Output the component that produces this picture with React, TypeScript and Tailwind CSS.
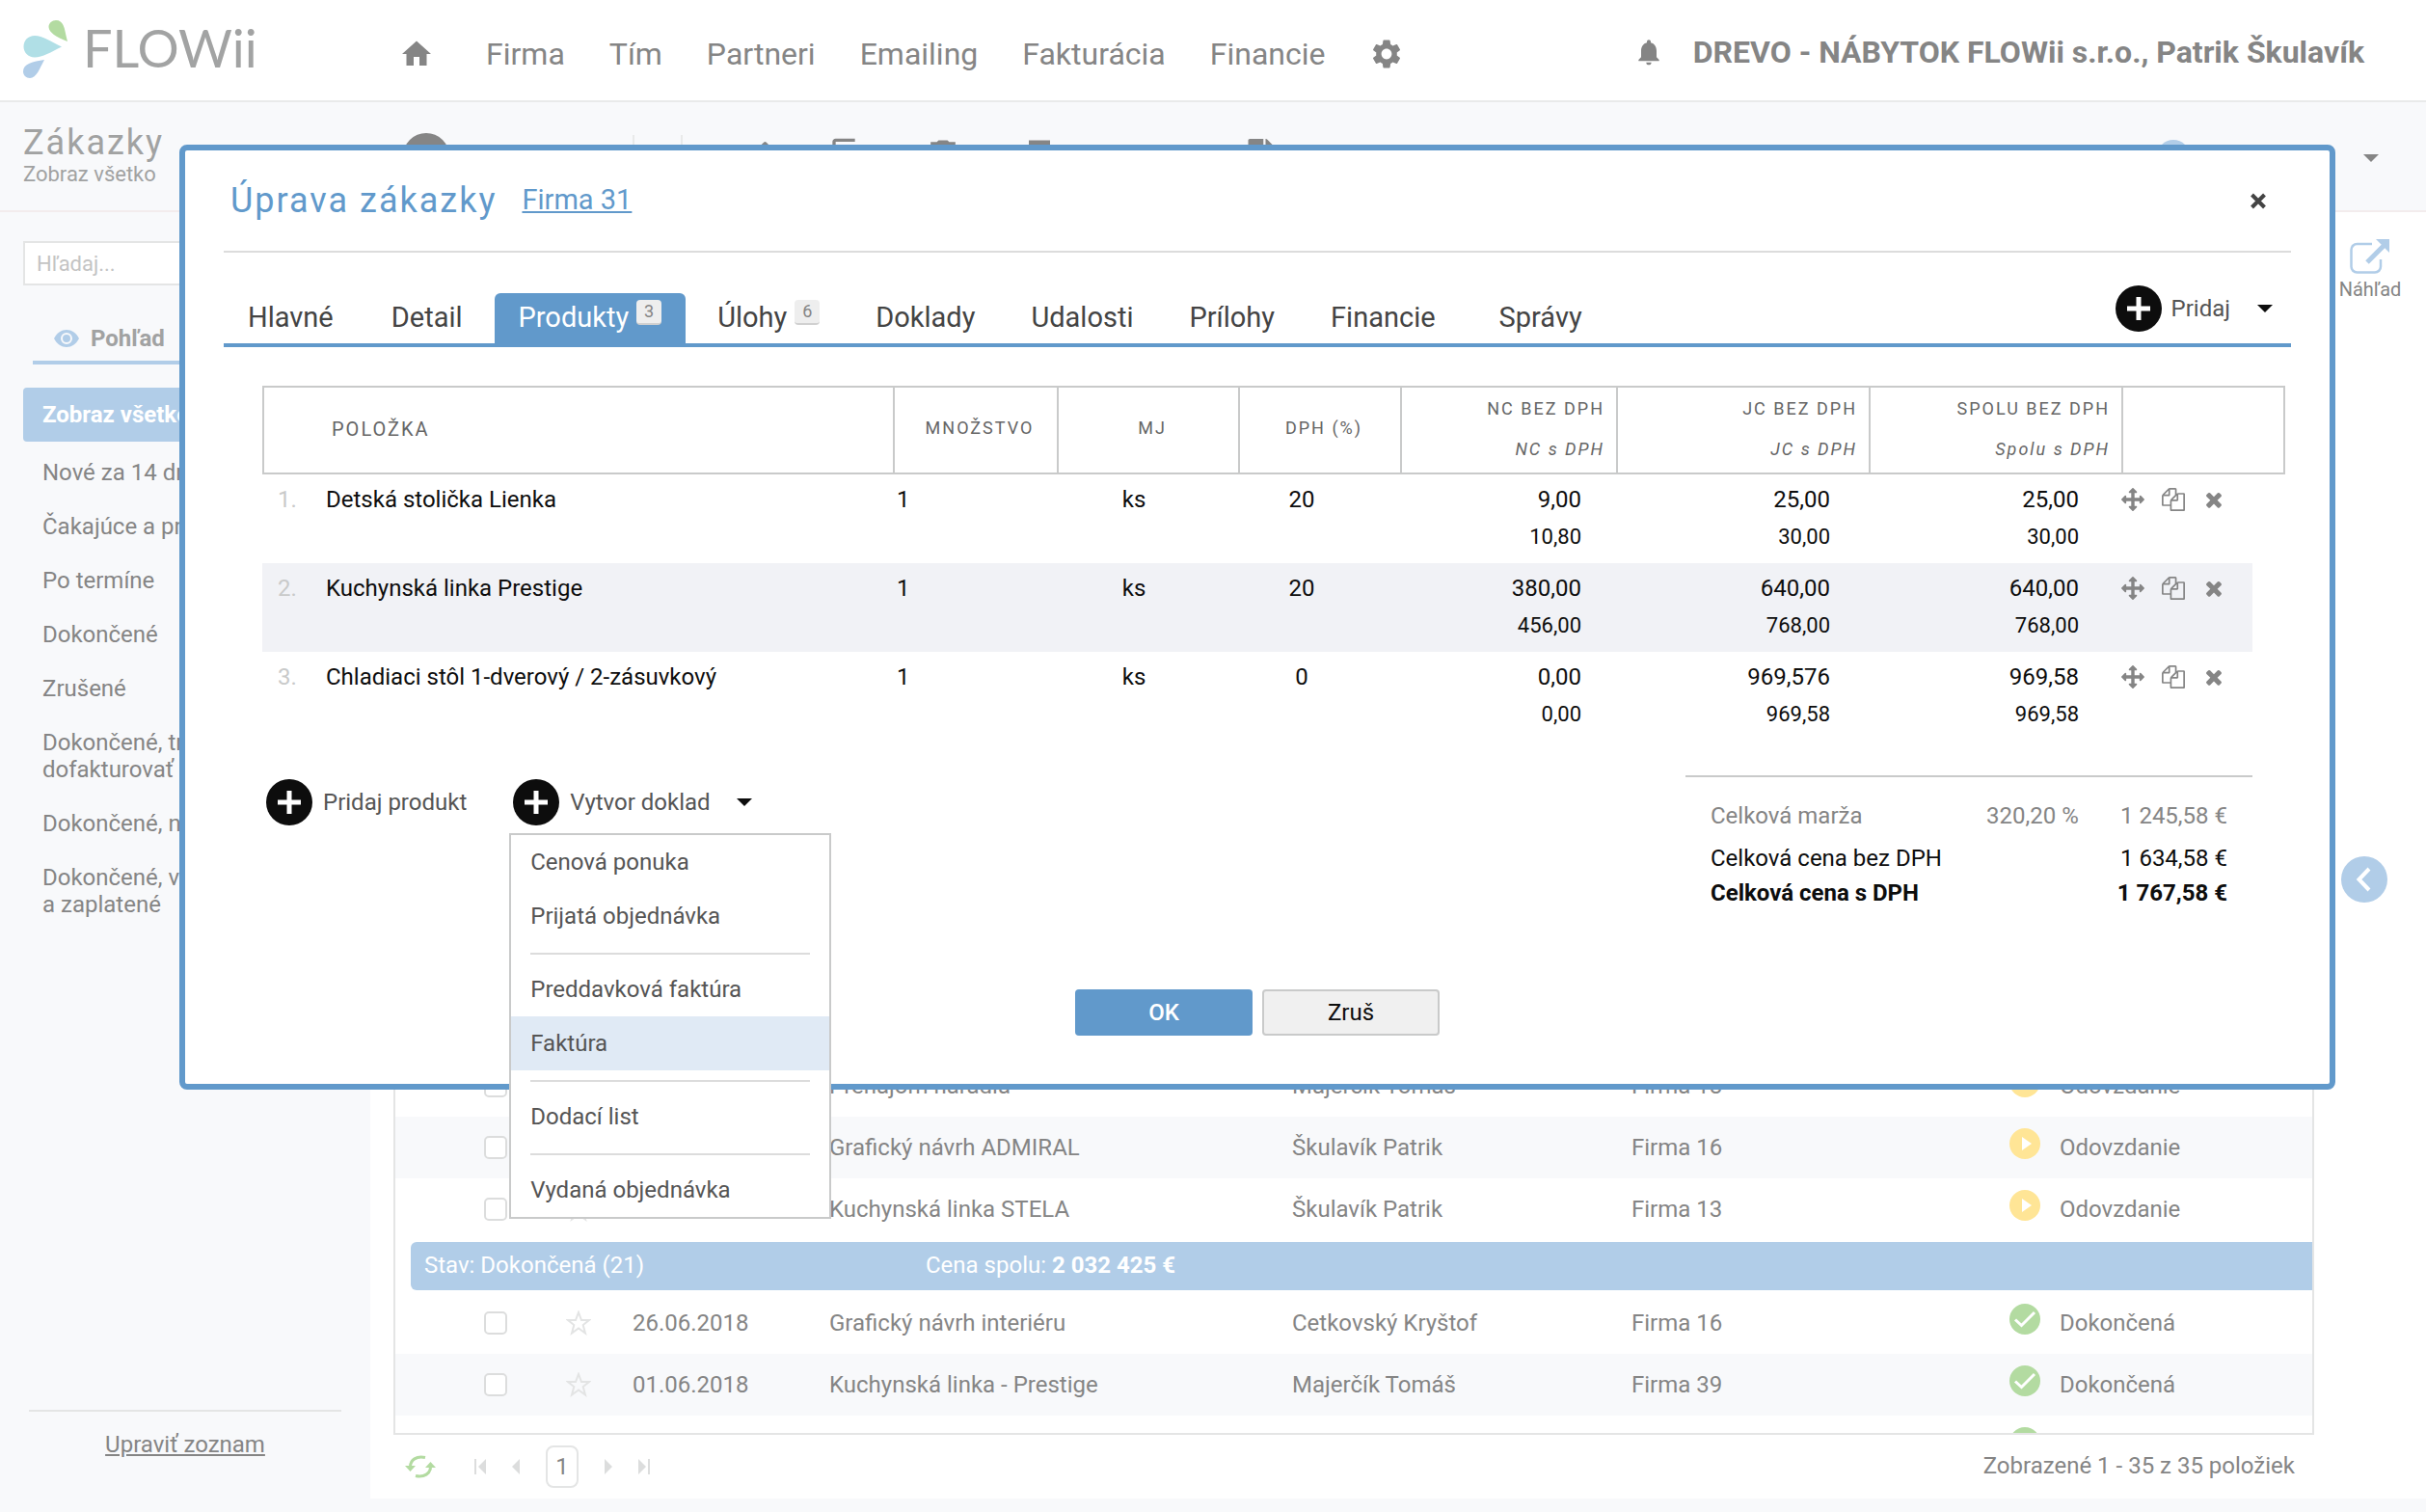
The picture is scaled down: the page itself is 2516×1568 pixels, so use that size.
import { useState, type ReactNode } from 'react'
import {
  MdContentCopy,
  MdDelete,
  MdEdit,
  MdHome,
  MdNotifications,
  MdPrint,
  MdSettings,
} from 'react-icons/md'
import { FaFile } from 'react-icons/fa'

const navLinks = ['Firma', 'Tím', 'Partneri', 'Emailing', 'Fakturácia', 'Financie']

const sidebarViews = [
  'Nové za 14 dní',
  'Čakajúce a prebiehajúce',
  'Po termíne',
  'Dokončené',
  'Zrušené',
  'Dokončené, treba dofakturovať',
  'Dokončené, nezaplatené',
  'Dokončené, vyfakturované a\u00a0zaplatené',
]

type Order = {
  date: string
  name: string
  person: string
  firm: string
  status: string
}

const activeOrders: Order[] = [
  { date: '', name: 'Prenájom náradia', person: 'Majerčík Tomáš', firm: 'Firma 18', status: 'Odovzdanie' },
  { date: '', name: 'Grafický návrh ADMIRAL', person: 'Škulavík Patrik', firm: 'Firma 16', status: 'Odovzdanie' },
  { date: '', name: 'Kuchynská linka STELA', person: 'Škulavík Patrik', firm: 'Firma 13', status: 'Odovzdanie' },
]

const doneOrders: Order[] = [
  { date: '26.06.2018', name: 'Grafický návrh interiéru', person: 'Cetkovský Kryštof', firm: 'Firma 16', status: 'Dokončená' },
  { date: '01.06.2018', name: 'Kuchynská linka - Prestige', person: 'Majerčík Tomáš', firm: 'Firma 39', status: 'Dokončená' },
]

const tabs: { label: string; count?: number }[] = [
  { label: 'Hlavné' },
  { label: 'Detail' },
  { label: 'Produkty', count: 3 },
  { label: 'Úlohy', count: 6 },
  { label: 'Doklady' },
  { label: 'Udalosti' },
  { label: 'Prílohy' },
  { label: 'Financie' },
  { label: 'Správy' },
]

const products = [
  { name: 'Detská stolička Lienka', qty: '1', unit: 'ks', vat: '20', nc: ['9,00', '10,80'], jc: ['25,00', '30,00'], total: ['25,00', '30,00'] },
  { name: 'Kuchynská linka Prestige', qty: '1', unit: 'ks', vat: '20', nc: ['380,00', '456,00'], jc: ['640,00', '768,00'], total: ['640,00', '768,00'] },
  { name: 'Chladiaci stôl 1-dverový / 2-zásuvkový', qty: '1', unit: 'ks', vat: '0', nc: ['0,00', '0,00'], jc: ['969,576', '969,58'], total: ['969,58', '969,58'] },
]

const menuGroups = [
  ['Cenová ponuka', 'Prijatá objednávka'],
  ['Preddavková faktúra', 'Faktúra'],
  ['Dodací list'],
  ['Vydaná objednávka'],
]

/* ---------- icons ---------- */

function LogoDrops() {
  return (
    <svg width="46" height="60" viewBox="0 0 46 60" aria-hidden="true">
      <path d="M46 22C34 17 27 13 26.500 7C26.500 3 30 0 34 0C38 0 40 2 41.500 5C43.500 9 44 15 46 22Z" fill="#b3dba1" />
      <path d="M40 27.500C29 33 20 38.500 12 38.500C5 38.500 .5 33 .5 27.500C.5 21 5 16 12 16C20 16 29 22 40 27.500Z" fill="#b0dfe6" />
      <path d="M22 41C17 50 14 60 7 60C3 60 0 57 0 53C0 45 10 43 22 41Z" fill="#b1cde8" />
    </svg>
  )
}

function PlusCircle() {
  return (
    <svg className="shrink-0" width="48" height="48" viewBox="0 0 48 48" aria-hidden="true">
      <circle cx="24" cy="24" r="24" fill="#0d0d0d" />
      <path d="M24 12v24M12 24h24" stroke="#fff" strokeWidth="5" />
    </svg>
  )
}

function Caret({ className }: { className?: string }) {
  return (
    <svg className={className} width="16" height="8" viewBox="0 0 16 8" aria-hidden="true">
      <path d="M0 0h16L8 8z" fill="currentColor" />
    </svg>
  )
}

function MoveIcon() {
  return (
    <svg width="24" height="24" viewBox="0 0 1792 1792" fill="currentColor" aria-hidden="true">
      <path d="M1792 896q0 26-19 45l-256 256q-19 19-45 19t-45-19-19-45v-128h-384v384h128q26 0 45 19t19 45-19 45l-256 256q-19 19-45 19t-45-19l-256-256q-19-19-19-45t19-45 45-19h128v-384h-384v128q0 26-19 45t-45 19-45-19l-256-256q-19-19-19-45t19-45l256-256q19-19 45-19t45 19 19 45v128h384v-384h-128q-26 0-45-19t-19-45 19-45l256-256q19-19 45-19t45 19l256 256q19 19 19 45t-19 45-45 19h-128v384h384v-128q0-26 19-45t45-19 45 19l256 256q19 19 19 45z" />
    </svg>
  )
}

function FilesIcon() {
  return (
    <svg width="24" height="24" viewBox="0 0 1792 1792" fill="currentColor" aria-hidden="true">
      <path d="M1696 384q40 0 68 28t28 68v1216q0 40-28 68t-68 28h-960q-40 0-68-28t-28-68v-288h-544q-40 0-68-28t-28-68v-672q0-40 20-88t48-76l408-408q28-28 76-48t88-20h416q40 0 68 28t28 68v328q68-40 128-40h416zm-544 213l-299 299h299v-299zm-640-384l-299 299h299v-299zm196 647l316-316v-416h-384v416q0 40-28 68t-68 28h-416v640h512v-256q0-40 20-88t48-76zm956 804v-1152h-384v416q0 40-28 68t-68 28h-416v640h896z" />
    </svg>
  )
}

function TimesIcon() {
  return (
    <svg width="24" height="24" viewBox="0 0 1792 1792" fill="currentColor" aria-hidden="true">
      <path d="M1490 1322q0 40-28 68l-136 136q-28 28-68 28t-68-28l-294-294-294 294q-28 28-68 28t-68-28l-136-136q-28-28-28-68t28-68l294-294-294-294q-28-28-28-68t28-68l136-136q28-28 68-28t68 28l294 294 294-294q28-28 68-28t68 28l136 136q28 28 28 68t-28 68l-294 294 294 294q28 28 28 68z" />
    </svg>
  )
}

function CloseIcon() {
  return (
    <svg width="24" height="24" viewBox="0 0 24 24" stroke="currentColor" strokeWidth="4" aria-hidden="true">
      <path d="M5.500 6L18.500 19M18.500 6L5.500 19" />
    </svg>
  )
}

function EyeIcon() {
  return (
    <svg width="26" height="18" viewBox="0 0 26 18" aria-hidden="true">
      <path d="M0 9C3 3 8 0 13 0s10 3 13 9c-3 6-8 9-13 9S3 15 0 9Z" fill="#b1cde8" />
      <circle cx="13" cy="9" r="5" fill="none" stroke="#f8f9fb" strokeWidth="2" />
    </svg>
  )
}

function ExternalIcon() {
  return (
    <svg width="42" height="36" viewBox="0 0 42 36" fill="none" stroke="#b1cde8" aria-hidden="true">
      <path d="M23 5H7.500a6 6 0 0 0-6 6v17.500a6 6 0 0 0 6 6H26a6 6 0 0 0 6-6V21" strokeWidth="2.500" />
      <path d="M18 24L35 7" strokeWidth="5" />
      <path d="M27 0h14v14z" fill="#b1cde8" stroke="none" />
    </svg>
  )
}

function RefreshIcon() {
  return (
    <svg width="32" height="24" viewBox="0 0 32 24" fill="none" stroke="#b3dba1" strokeWidth="3" aria-hidden="true">
      <path d="M5.500 12C5.500 5 12 .5 21 2.500" />
      <path d="M26.500 12C26.500 19 20 23.500 11 21.500" />
      <path d="M0 11h11l-5.500 6z" fill="#b3dba1" stroke="none" />
      <path d="M21 13h11l-5.500-6z" fill="#b3dba1" stroke="none" />
    </svg>
  )
}

function StarIcon() {
  return (
    <svg width="26" height="26" viewBox="0 0 26 26" fill="none" stroke="#e3e4e4" strokeWidth="2" aria-hidden="true">
      <path d="M13 2l3 8h8l-6.300 5 2.300 8.500L13 18.500l-7 5L8.300 15 2 10h8z" />
    </svg>
  )
}

function StatusIcon({ done }: { done: boolean }) {
  return (
    <svg className="mb-2 shrink-0" width="32" height="32" viewBox="0 0 32 32" aria-hidden="true">
      <circle cx="16" cy="16" r="16" fill={done ? '#b3dba1' : '#ffe596'} />
      {done ? (
        <path d="M6 16.500l6.500 6L26 9" fill="none" stroke="#fff" strokeWidth="3" />
      ) : (
        <path d="M13 9l10 7-10 7z" fill="#fff" />
      )}
    </svg>
  )
}

/* ---------- background page ---------- */

function Header() {
  return (
    <header className="flex h-[106px] items-center border-b-2 border-[#e9eaea] bg-white pr-16 pl-6 text-[32px] text-[#858585]">
      <a href="#" className="flex h-[62px] w-[390px] shrink-0 items-start gap-4 text-[#a2a3a3]">
        <LogoDrops />
        <span className="font-['Lato',sans-serif] text-[54px] leading-[58px]">FLOWii</span>
      </a>
      <nav className="flex items-center gap-[46px] pt-2">
        <a href="#" aria-label="Domov" className="mr-2">
          <MdHome size={36} />
        </a>
        {navLinks.map((link) => (
          <a key={link} href="#">{link}</a>
        ))}
        <a href="#" aria-label="Nastavenia">
          <MdSettings size={36} />
        </a>
      </nav>
      <div className="ml-auto flex items-center gap-[30px] pt-1">
        <button type="button" aria-label="Upozornenia">
          <MdNotifications size={32} />
        </button>
        <span className="font-bold">DREVO - NÁBYTOK FLOWii s.r.o., Patrik Škulavík</span>
      </div>
    </header>
  )
}

function Toolbar() {
  return (
    <div className="flex h-[114px] items-center border-b-2 border-[#f3eced] bg-[#f8f9fb] pr-[49px] text-[#858585]">
      <div className="w-[418px] shrink-0 pb-0.5 pl-6 text-[#a1a2a2]">
        <h1 className="text-[36px] leading-10 tracking-[2px]">Zákazky</h1>
        <p className="text-[22px] leading-[26px]">Zobraz všetko</p>
      </div>
      <span className="size-12 rounded-full bg-[#858585]" />
      <span className="ml-[190px] h-11 w-[2px] bg-[#e9eaea]" />
      <span className="ml-12 h-11 w-[2px] bg-[#e9eaea]" />
      <div className="ml-14 flex items-center gap-14">
        <MdEdit size={40} />
        <MdContentCopy size={40} />
        <MdDelete size={44} />
        <MdPrint size={44} />
      </div>
      <FaFile className="ml-[190px]" size={36} />
      <span className="ml-auto size-[34px] rounded-full bg-[#b1cde8]" />
      <button type="button" aria-label="Viac" className="ml-[180px] pt-1">
        <Caret />
      </button>
    </div>
  )
}

function Sidebar() {
  return (
    <aside className="flex w-96 shrink-0 flex-col bg-[#f8f9fb] px-6 pt-[30px] text-[24px] leading-7 text-[#858585]">
      <input
        type="text"
        aria-label="Hľadaj"
        placeholder="Hľadaj..."
        className="h-[46px] border-2 border-[#e4e5e5] bg-white px-3 text-[22px] placeholder:text-[#c4c4c4]"
      />
      <div className="mx-2.5 mt-8 flex h-[50px] items-center gap-3 border-b-4 border-[#b1cde8] pl-[22px] font-bold text-[#a1a2a2]">
        <EyeIcon />
        Pohľad
      </div>
      <ul className="mt-6">
        <li className="mb-1 rounded bg-[#b1cde8] px-5 py-3.5 font-bold text-white">
          <a href="#">Zobraz všetko</a>
        </li>
        {sidebarViews.map((view) => (
          <li key={view} className="px-5 py-3.5">
            <a href="#">{view}</a>
          </li>
        ))}
      </ul>
      <div className="mx-1.5 mt-auto mb-[56px] border-t-2 border-[#e4e5e5] pt-5 text-center">
        <a href="#" className="underline">Upraviť zoznam</a>
      </div>
    </aside>
  )
}

function OrderRow({ order, shaded }: { order: Order; shaded: boolean }) {
  return (
    <tr className={shaded ? 'h-16 bg-[#f8f9fb]' : 'h-16'}>
      <td className="pl-[92px]">
        <input
          type="checkbox"
          aria-label={order.name}
          className="block size-6 appearance-none rounded-[5px] border-2 border-[#dcdddd] bg-white"
        />
      </td>
      <td className="pl-[25px]">
        <StarIcon />
      </td>
      <td>{order.date}</td>
      <td>{order.name}</td>
      <td>{order.person}</td>
      <td>{order.firm}</td>
      <td>
        <span className="flex items-center gap-5">
          <StatusIcon done={order.status === 'Dokončená'} />
          {order.status}
        </span>
      </td>
    </tr>
  )
}

function OrdersPanel() {
  return (
    <main className="flex flex-1 flex-col bg-white pl-6 text-[24px] leading-7 text-[#858585]">
      <div className="mt-6 flex flex-1 flex-col justify-end border-2 border-[#e4e5e5]">
        <table className="w-full table-fixed">
          <colgroup>
            <col className="w-[152px]" />
            <col className="w-[94px]" />
            <col className="w-[204px]" />
            <col />
            <col className="w-[352px]" />
            <col className="w-[392px]" />
            <col className="w-[314px]" />
          </colgroup>
          <tbody>
            {activeOrders.map((order, i) => (
              <OrderRow key={order.name} order={order} shaded={i % 2 === 1} />
            ))}
            <tr>
              <td colSpan={7} className="py-[2px] pl-4">
                <div className="flex h-[50px] items-center rounded-l-md bg-[#b1cde8] pb-[2px] pl-3.5 text-white">
                  <span className="w-[520px]">Stav: Dokončená (21)</span>
                  <span>
                    Cena spolu: <b>2 032 425 €</b>
                  </span>
                </div>
              </td>
            </tr>
            {doneOrders.map((order, i) => (
              <OrderRow key={order.name} order={order} shaded={i % 2 === 1} />
            ))}
            <tr>
              <td colSpan={6} />
              <td>
                <div className="h-[18px] overflow-hidden pt-3">
                  <StatusIcon done />
                </div>
              </td>
            </tr>
          </tbody>
        </table>
      </div>
      <div className="flex h-[66px] items-center pr-5 pl-3 text-[#dcdddd]">
        <button type="button" aria-label="Obnoviť">
          <RefreshIcon />
        </button>
        <div className="ml-10 flex items-center gap-[27px]">
          <button type="button" aria-label="Prvá strana">
            <svg width="12" height="16" viewBox="0 0 12 16" fill="currentColor"><path d="M0 0h2v16H0zM12 0v16L4 8z" /></svg>
          </button>
          <button type="button" aria-label="Predošlá strana">
            <svg width="8" height="16" viewBox="0 0 8 16" fill="currentColor"><path d="M8 0v16L0 8z" /></svg>
          </button>
          <button type="button" className="h-11 w-[34px] rounded-lg border-2 border-[#e4e5e5] text-[#858585]">1</button>
          <button type="button" aria-label="Ďalšia strana">
            <svg width="8" height="16" viewBox="0 0 8 16" fill="currentColor"><path d="M0 0v16l8-8z" /></svg>
          </button>
          <button type="button" aria-label="Posledná strana">
            <svg width="12" height="16" viewBox="0 0 12 16" fill="currentColor"><path d="M10 0h2v16h-2zM0 0v16l8-8z" /></svg>
          </button>
        </div>
        <span className="ml-auto pb-0.5 text-[#858585]">Zobrazené 1 - 35 z 35 položiek</span>
      </div>
    </main>
  )
}

function PreviewRail() {
  return (
    <aside className="flex w-[116px] shrink-0 flex-col items-center bg-white pt-7 text-[20px] leading-6 text-[#858585]">
      <a href="#" className="flex flex-col items-center gap-1">
        <ExternalIcon />
        Náhľad
      </a>
      <button type="button" aria-label="Rozbaliť" className="mt-[576px] mr-3">
        <svg width="48" height="48" viewBox="0 0 48 48" fill="none">
          <circle cx="24" cy="24" r="24" fill="#b1cde8" />
          <path d="M29 13L18.500 24 29 35" stroke="#fff" strokeWidth="4" />
        </svg>
      </button>
    </aside>
  )
}

/* ---------- dialog ---------- */

function DocumentMenu() {
  return (
    <div role="menu" className="absolute top-14 -left-1 w-[334px] border-2 border-[#c9caca] bg-white text-[24px] leading-7">
      {menuGroups.map((group, i) => (
        <div key={group[0]}>
          {i > 0 && <hr className="mx-5 mt-2.5 mb-2 border-t-2 border-[#dcdcdc]" />}
          {group.map((item) => (
            <button
              key={item}
              type="button"
              role="menuitem"
              className={`block w-full px-5 py-3.5 text-left ${item === 'Faktúra' ? 'bg-[#e0eaf5]' : 'hover:bg-[#e0eaf5]'}`}
            >
              {item}
            </button>
          ))}
        </div>
      ))}
    </div>
  )
}

function DoubleHead({ top, bottom }: { top: string; bottom: string }) {
  return (
    <th className="border-y-2 border-l-2 border-[#c9caca] pr-3 pb-0.5 text-right text-[18px] leading-[42px] font-normal tracking-[2px]">
      {top}
      <br />
      <i>{bottom}</i>
    </th>
  )
}

function PriceCell({ values, className }: { values: string[]; className: string }) {
  return (
    <td className={`text-right ${className}`}>
      {values[0]}
      <br />
      <span className="text-[22px]">{values[1]}</span>
    </td>
  )
}

function ActionButton({ label, children }: { label: string; children: ReactNode }) {
  return (
    <button type="button" aria-label={label} className="flex h-[38px] items-center">
      {children}
    </button>
  )
}

function ProductTable() {
  return (
    <table className="w-full table-fixed border-separate border-spacing-0">
      <colgroup>
        <col className="w-[66px]" />
        <col />
        <col className="w-[170px]" />
        <col className="w-[188px]" />
        <col className="w-[168px]" />
        <col className="w-[224px]" />
        <col className="w-[262px]" />
        <col className="w-[262px]" />
        <col className="w-[136px]" />
        <col className="w-[34px]" />
      </colgroup>
      <thead>
        <tr className="h-[92px] text-[#666]">
          <th colSpan={2} className="border-y-2 border-l-2 border-[#c9caca] pb-0.5 pl-[70px] text-left text-[20px] font-normal tracking-[2px]">POLOŽKA</th>
          <th className="border-y-2 border-l-2 border-[#c9caca] pb-1.5 pl-2 text-[18px] font-normal tracking-[2px]">MNOŽSTVO</th>
          <th className="border-y-2 border-l-2 border-[#c9caca] pb-1.5 pl-2 text-[18px] font-normal tracking-[2px]">MJ</th>
          <th className="border-y-2 border-l-2 border-[#c9caca] pb-1.5 pl-2 text-[18px] font-normal tracking-[2px]">DPH (%)</th>
          <DoubleHead top="NC BEZ DPH" bottom="NC s DPH" />
          <DoubleHead top="JC BEZ DPH" bottom="JC s DPH" />
          <DoubleHead top="SPOLU BEZ DPH" bottom="Spolu s DPH" />
          <th colSpan={2} className="border-2 border-[#c9caca]" />
        </tr>
      </thead>
      <tbody className="text-[24px] leading-[38px] text-[#0d0d0d]">
        {products.map((p, i) => {
          const shade = i % 2 === 1 ? 'bg-[#f1f2f6]' : 'bg-white'
          return (
            <tr key={p.name} className="h-[92px] align-top *:pt-[7px]">
              <td className={`pl-4 text-[#c9caca] ${shade}`}>{i + 1}.</td>
              <td className={shade}>{p.name}</td>
              <td className={`pl-1 ${shade}`}>{p.qty}</td>
              <td className={`pr-7 text-center ${shade}`}>{p.unit}</td>
              <td className={`pr-9 text-center ${shade}`}>{p.vat}</td>
              <PriceCell values={p.nc} className={`pr-9 ${shade}`} />
              <PriceCell values={p.jc} className={`pr-10 ${shade}`} />
              <PriceCell values={p.total} className={`pr-11 ${shade}`} />
              <td className={`text-[#858585] ${shade}`}>
                <div className="flex gap-[18px]">
                  <ActionButton label="Presunúť">
                    <MoveIcon />
                  </ActionButton>
                  <ActionButton label="Kopírovať">
                    <FilesIcon />
                  </ActionButton>
                  <ActionButton label="Odstrániť">
                    <TimesIcon />
                  </ActionButton>
                </div>
              </td>
              <td />
            </tr>
          )
        })}
      </tbody>
    </table>
  )
}

function OrderDialog() {
  const [activeTab, setActiveTab] = useState('Produkty')
  const [menuOpen, setMenuOpen] = useState(true)

  return (
    <section
      role="dialog"
      aria-label="Úprava zákazky"
      className="absolute top-[150px] right-[94px] left-[186px] rounded-lg border-6 border-[#6199cb] bg-white px-10 pb-[50px] text-[24px] text-[#555]"
    >
      <div className="flex h-[106px] items-center border-b-2 border-[#dcdcdc] pr-[22px] pl-[7px] text-[#6199cb]">
        <h2 className="text-[36px] tracking-[2px]">Úprava zákazky</h2>
        <a href="#" className="ml-[26px] text-[29px] underline">Firma 31</a>
        <button type="button" aria-label="Zavrieť" className="ml-auto text-[#444]">
          <CloseIcon />
        </button>
      </div>

      <div className="flex h-[98px] items-end border-b-4 border-[#6199cb]">
        <div role="tablist" className="flex gap-2">
          {tabs.map((tab) => (
            <button
              key={tab.label}
              type="button"
              role="tab"
              aria-selected={tab.label === activeTab}
              onClick={() => setActiveTab(tab.label)}
              className={`flex h-[52px] items-center gap-2 rounded-t-md px-[25px] text-[29px] first:mr-0.5 last:ml-2 ${
                tab.label === activeTab ? 'bg-[#6199cb] text-white' : 'text-[#444]'
              }`}
            >
              {tab.label}
              {tab.count !== undefined && (
                <span className="mb-3 h-[26px] w-[26px] rounded border-b-2 border-[#d0d0d0] bg-[#eee] text-[18px] leading-6 text-[#858585]">
                  {tab.count}
                </span>
              )}
            </button>
          ))}
        </div>
        <button type="button" className="mb-3 ml-auto flex items-center pr-[19px]">
          <PlusCircle />
          <span className="ml-2.5">Pridaj</span>
          <Caret className="ml-7 text-[#0d0d0d]" />
        </button>
      </div>

      <div className="pt-10 pr-1.5 pl-10">
        <ProductTable />

        <div className="flex justify-between pt-9 pr-[34px]">
          <div className="flex items-start gap-12 pt-1 pl-1">
            <button type="button" className="flex items-center gap-[11px]">
              <PlusCircle />
              Pridaj produkt
            </button>
            <div className="relative">
              <button
                type="button"
                aria-haspopup="menu"
                aria-expanded={menuOpen}
                onClick={() => setMenuOpen(!menuOpen)}
                className="flex items-center gap-[11px]"
              >
                <PlusCircle />
                Vytvor doklad
                <Caret className="ml-4 text-[#0d0d0d]" />
              </button>
              {menuOpen && <DocumentMenu />}
            </div>
          </div>

          <table className="w-[588px] border-t-2 border-[#c9caca] leading-9 text-[#0d0d0d]">
            <tbody>
              <tr className="text-[#858585]">
                <td className="pt-[22px] pb-2 pl-[26px]">Celková marža</td>
                <td className="pt-[22px] pr-10 pb-2 text-right">320,20 %</td>
                <td className="w-[110px] pt-[22px] pr-[26px] pb-2 text-right whitespace-nowrap">1 245,58 €</td>
              </tr>
              <tr>
                <td className="pl-[26px]" colSpan={2}>Celková cena bez DPH</td>
                <td className="pr-[26px] text-right whitespace-nowrap">1 634,58 €</td>
              </tr>
              <tr className="font-bold">
                <td className="pl-[26px]" colSpan={2}>Celková cena s DPH</td>
                <td className="pr-[26px] text-right whitespace-nowrap">1 767,58 €</td>
              </tr>
            </tbody>
          </table>
        </div>
      </div>

      <div className="mt-[82px] flex justify-center gap-2.5">
        <button type="button" className="h-12 w-[184px] rounded bg-[#6199cb] font-medium text-white">OK</button>
        <button type="button" className="h-12 w-[184px] rounded border-2 border-[#c9caca] bg-[#f0f0f0] text-[#0d0d0d]">Zruš</button>
      </div>
    </section>
  )
}

export default function App() {
  return (
    <div className="relative flex min-h-screen flex-col bg-white font-['Roboto',sans-serif]">
      <Header />
      <Toolbar />
      <div className="flex flex-1">
        <Sidebar />
        <div className="flex flex-1 flex-col">
          <div className="flex flex-1">
            <OrdersPanel />
            <PreviewRail />
          </div>
          <div className="h-3.5 bg-[#f8f9fb]" />
        </div>
      </div>
      <OrderDialog />
    </div>
  )
}
